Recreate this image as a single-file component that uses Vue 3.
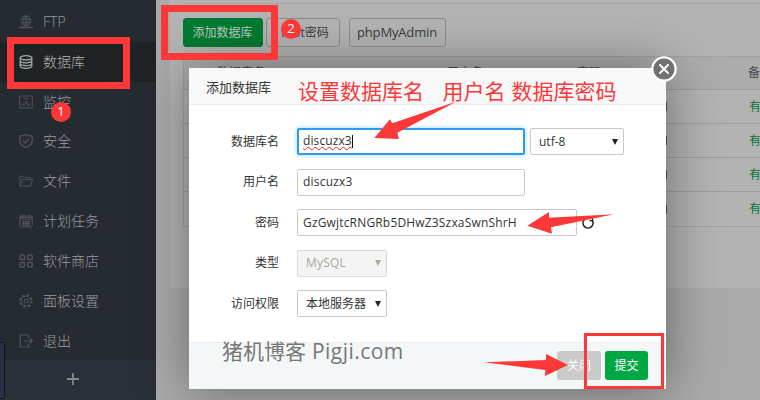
<script setup>
const menu = [
  { id: 'ftp', label: 'FTP' },
  { id: 'db', label: '数据库', active: true },
  { id: 'monitor', label: '监控' },
  { id: 'safe', label: '安全' },
  { id: 'files', label: '文件' },
  { id: 'cron', label: '计划任务' },
  { id: 'soft', label: '软件商店' },
  { id: 'config', label: '面板设置' },
  { id: 'exit', label: '退出' },
]
const rows = [1, 2, 3, 4]
</script>

<template>
  <div class="page">
    <aside class="sidebar">
      <nav class="menu">
        <a v-for="m in menu" :key="m.id" class="item" :class="{ active: m.active }">
          <svg class="icon" viewBox="0 0 14 14" fill="none" stroke="currentColor">
            <g v-if="m.id === 'ftp'">
              <circle cx="7" cy="5.8" r="5" /><ellipse cx="7" cy="5.8" rx="2.3" ry="5" />
              <path d="M2 4.2h10M2 7.6h10M7 1v12" /><path d="M0 12.4h14" stroke-width="1.6" />
            </g>
            <g v-else-if="m.id === 'db'" stroke-width="1.3">
              <ellipse cx="7" cy="2.8" rx="5.8" ry="2.1" />
              <path d="M1.2 2.8v8.3c0 1.2 2.6 2.2 5.8 2.2s5.8-1 5.8-2.2V2.8M1.2 5.7c0 1.2 2.6 2.1 5.8 2.1s5.8-.9 5.8-2.1M1.2 8.5c0 1.2 2.6 2.1 5.8 2.1s5.8-.9 5.8-2.1" />
            </g>
            <g v-else-if="m.id === 'monitor'">
              <path d="M.7 1h12.6v12H.7zM4.5 3.5h5M2.5 10.5l1.7-1.5 1.2 1.5L7.5 6l1.5 5 1.2-2.4 1.5 1.6" />
            </g>
            <g v-else-if="m.id === 'safe'" stroke-width="1.3">
              <path d="M7 .5c1.8 1.200 3.700 1.600 6.200 1.700v4.600c0 3-2.400 5.400-6.200 6.800C3.200 12.200.8 9.800.8 6.800V2.200C3.300 2.100 5.200 1.700 7 .5zM4 6.800l2.200 2.200L10.300 4.500" />
            </g>
            <g v-else-if="m.id === 'files'">
              <path d="M1 12V2.300h4l1.200 1.500h5.500v1.900M1 12l2-6.300h10.500L11.800 12z" />
            </g>
            <g v-else-if="m.id === 'cron'">
              <rect x=".8" y="2" width="12.400" height="11" rx="1" />
              <path d="M1 3.500h12M1 5h12M3.700.5v2.500M10.300.5v2.500M3 7.500h8M3 9.500h8M3 11.300h8M4.800 6.500v5.500M7.200 6.500v5.500M9.600 6.500v5.500" />
            </g>
            <g v-else-if="m.id === 'soft'" stroke-width="1.500">
              <rect x="1" y="1" width="4.600" height="4.600" rx="1.200" /><rect x="8.600" y="1" width="4.600" height="4.600" rx="1.200" />
              <rect x="1" y="8.400" width="4.600" height="4.600" rx="1.200" /><rect x="8.600" y="8.400" width="4.600" height="4.600" rx="1.200" />
            </g>
            <g v-else-if="m.id === 'config'">
              <circle cx="7" cy="7" r="6" stroke-width="1.600" stroke-dasharray="2.400 2.312" />
              <circle cx="7" cy="7" r="4.900" /><circle cx="7" cy="7" r="2" />
            </g>
            <g v-else stroke-width="1.200">
              <path d="M9.500 4V1H1.300v12h8.200v-3M5 7h8M10.700 4.500L13.300 7l-2.600 2.500" />
            </g>
          </svg>
          <span>{{ m.label }}</span>
        </a>
      </nav>
      <div class="add"><svg width="12" height="12" viewBox="0 0 12 12"><path d="M6 0v12M0 6h12" stroke="#85878a" stroke-width="1.800" /></svg></div>
      <i class="dock"></i>
    </aside>

    <main class="main">
      <section class="panel">
        <div class="toolbar">
          <button class="tb green">添加数据库</button>
          <button class="tb root">root密码</button>
          <button class="tb php">phpMyAdmin</button>
        </div>
        <div class="table">
          <div class="tr th">
            <i class="check"></i><span>数据库名</span><span>用户名</span><span>密码</span><span>备份</span>
          </div>
          <div v-for="r in rows" :key="r" class="tr">
            <i></i><span></span><span></span><span class="bar"></span><span class="yes">有</span>
          </div>
        </div>
      </section>
    </main>

    <section class="modal">
      <header class="title">添加数据库</header>
      <div class="form">
        <label>数据库名</label>
        <div class="field">
          <div class="input focus"><span class="typed">discuzx3</span></div>
          <div class="select utf"><span>utf-8</span><i></i></div>
        </div>
        <label>用户名</label>
        <div class="field"><div class="input"><span class="name">discuzx3</span></div></div>
        <label>密码</label>
        <div class="field">
          <div class="input wide"><span class="pw">GzGwjtcRNGRb5DHwZ3SzxaSwnShrH</span></div>
          <svg class="reload" width="12" height="12" viewBox="0 0 12 12" fill="none" stroke="#222" stroke-width="1.600"><path d="M10.300 3.500A5 5 0 1 1 2.500 2.500" /><path d="M7.600 3.600h3V.8" stroke-width="1.200" /></svg>
        </div>
        <label>类型</label>
        <div class="field"><div class="select disabled"><span>MySQL</span><i></i></div></div>
        <label>访问权限</label>
        <div class="field"><div class="select"><span>本地服务器</span><i></i></div></div>
      </div>
      <footer class="foot">
        <button class="btn gray">关闭</button>
        <button class="btn ok">提交</button>
      </footer>
      <svg class="close" width="28" height="28" viewBox="0 0 28 28"><circle cx="14" cy="14" r="11.700" fill="#717171" stroke="#fff" stroke-width="2.200" /><path d="M10 10l8 8M18 10l-8 8" stroke="#fff" stroke-width="2" stroke-linecap="round" /></svg>
    </section>

    <div class="notes">
      <i class="box b1"></i><i class="box b2"></i><i class="box b3"></i>
      <b class="dot d1">1</b><b class="dot d2">2</b>
      <span class="note n1">设置数据库名</span>
      <span class="note n2">用户名</span>
      <span class="note n3">数据库密码</span>
      <span class="note mark">猪机博客</span>
      <span class="note mark latin">Pigji.com</span>
      <svg class="arrows" width="760" height="400" fill="#fd3838">
        <path d="M374.300 138L390 119.300l2.300 4L456.500 101.500 397.300 132.700l1.700 6.300z" />
        <path d="M527.300 225.700L549 212v5.700l65-3.400-63 13 1 6.400z" />
        <path d="M484 362.300l62-2.300v-6l22 11-23 11 .3-6z" />
      </svg>
    </div>
  </div>
</template>

<style>
body { margin: 0; overflow: hidden; }
</style>

<style scoped>
* { box-sizing: border-box; }
.page { position: relative; width: 760px; height: 400px; display: flex; overflow: hidden; background: #aaa; font: 12px/1 "Open Sans", "Noto Sans CJK SC", sans-serif; color: #333; }
button { font: inherit; padding: 0; white-space: nowrap; }
.sidebar { position: relative; z-index: 1; width: 156px; flex: none; display: flex; flex-direction: column; background: #252b31; }
.menu { height: 360px; padding-top: 2px; display: flex; flex-direction: column; }
.item { height: 39.850px; flex: none; display: flex; align-items: center; padding-left: 19px; gap: 10px; color: #505458; font-size: 14px; }
.item span { color: #9a9c9f; font-weight: 300; }
.item.active { background: #1f2326; color: #a4a6a8; }
.item.active span { color: #b5b6b7; }
.icon { width: 14px; height: 14px; }
.add { height: 40px; background: #2a3037; display: flex; align-items: center; justify-content: center; padding: 0 10px 2px 0; }
.dock { position: absolute; left: 0; top: 342px; width: 5px; height: 57px; background: #2c3046; border: 1px solid #15151f; border-left: 0; border-radius: 0 2px 2px 0; }
.main { flex: 1; min-width: 0; padding-left: 14px; }
.panel { height: 288px; background: #b3b3b3; padding: 3px 0 0 13px; }
.toolbar { height: 53px; border-top: 1px solid #a5a5a5; padding-top: 14px; display: flex; }
.tb { height: 29px; border: 1px solid #8c8c8c; border-radius: 3px; background: #b3b3b3; color: #3b3b3b; }
.green { width: 80px; background: #007a31; border-color: #007a31; color: #b9c9bd; padding-right: 1px; }
.root { width: 74px; margin-left: 3px; padding-left: 4px; }
.php { width: 97px; margin-left: 9px; font-size: 13px; letter-spacing: -.15px; padding-right: 1px; }
.table { border: 1px solid #a0a0a0; border-right: 0; width: 620px; }
.tr { height: 34px; border-bottom: 1px solid #9d9d9d; display: grid; grid-template-columns: 33px 230px 130px 168px 1fr; align-items: center; }
.tr:last-child { border-bottom: 0; }
.th { height: 33px; background: #acacac; color: #444; }
.check { width: 10px; height: 10px; margin-left: 7px; border: 1px solid #777; border-radius: 2px; }
.bar { justify-self: start; width: 2px; height: 9px; margin-left: 88px; background: #555; }
.yes { color: #087536; margin-left: 4px; }
.th span:last-child { margin-left: 3px; }
.modal { position: absolute; z-index: 2; left: 189px; top: 68px; width: 477px; height: 321px; display: flex; flex-direction: column; background: #fff; box-shadow: 1px 1px 50px rgba(0, 0, 0, .4); }
.title { height: 37px; background: #f8f8f8; border-bottom: 1px solid #eee; padding-left: 17px; font-size: 13px; line-height: 38px; }
.form { flex: 1; padding: 23px 0 0; display: grid; grid-template-columns: 90px 1fr; column-gap: 18px; grid-auto-rows: 27px; row-gap: 13.500px; align-items: center; align-content: start; }
.form label { text-align: right; }
.field { display: flex; align-items: center; }
.input, .select { width: 228px; height: 27px; border: 1px solid #c8c8c8; border-radius: 2px; display: flex; align-items: center; padding-left: 5px; }
.focus { border: 2px solid #2d9cf0; padding-left: 4px; box-shadow: 0 0 5px rgba(60, 170, 240, .5); }
.typed { position: relative; padding-bottom: 1px; border-right: 1px solid #111; text-decoration: underline wavy #f02020 1px; text-underline-offset: 1px; letter-spacing: .1px; }
.name { letter-spacing: .2px; }
.wide { width: 280px; }
.pw { letter-spacing: .17px; }
.reload { margin-left: 5px; }
.select { width: 90px; justify-content: space-between; padding: 0 5px 0 8px; }
.select i { border: 3.500px solid transparent; border-top: 6px solid #222; border-bottom: 0; }
.utf { width: 94px; margin-left: 5px; }
.disabled { background: #f4f4f4; border-color: #d9d9d9; color: #aca899; }
.disabled span { letter-spacing: .2px; }
.disabled i { border-top-color: #aca899; }
.foot { height: 47px; background: #f3f7f8; border-top: 1px solid #edf0f2; display: flex; justify-content: flex-end; gap: 4px; padding: 8px 18px 0 0; }
.btn { height: 29px; width: 44px; border: 0; border-radius: 3px; color: #fff; background: #cacaca; }
.ok { width: 43px; background: #00a743; }
.close { position: absolute; left: 461px; top: -13px; }
.notes { position: absolute; z-index: 3; inset: 0; }
.box { position: absolute; border: 7px solid #fd3838; }
.b1 { left: 7px; top: 37px; width: 123px; height: 52px; }
.b2 { left: 161px; top: 5px; width: 117px; height: 55px; }
.b3 { left: 584px; top: 333px; width: 80px; height: 56px; border-width: 3px; }
.dot { position: absolute; width: 20px; height: 20px; border-radius: 50%; background: #fd3838; color: #fff; font: 400 13px/19px "Open Sans", sans-serif; text-align: center; }
.d1 { left: 51px; top: 102px; }
.d2 { left: 281px; top: 19px; }
.note { position: absolute; top: 80px; font-size: 21px; line-height: 22px; color: #fd3838; white-space: nowrap; }
.n1 { left: 298px; }
.n2 { left: 442.500px; }
.n3 { left: 511.500px; }
.mark { left: 222px; top: 340px; color: #777; }
.latin { left: 312px; letter-spacing: .45px; }
.arrows { position: absolute; left: 0; top: 0; }
</style>
